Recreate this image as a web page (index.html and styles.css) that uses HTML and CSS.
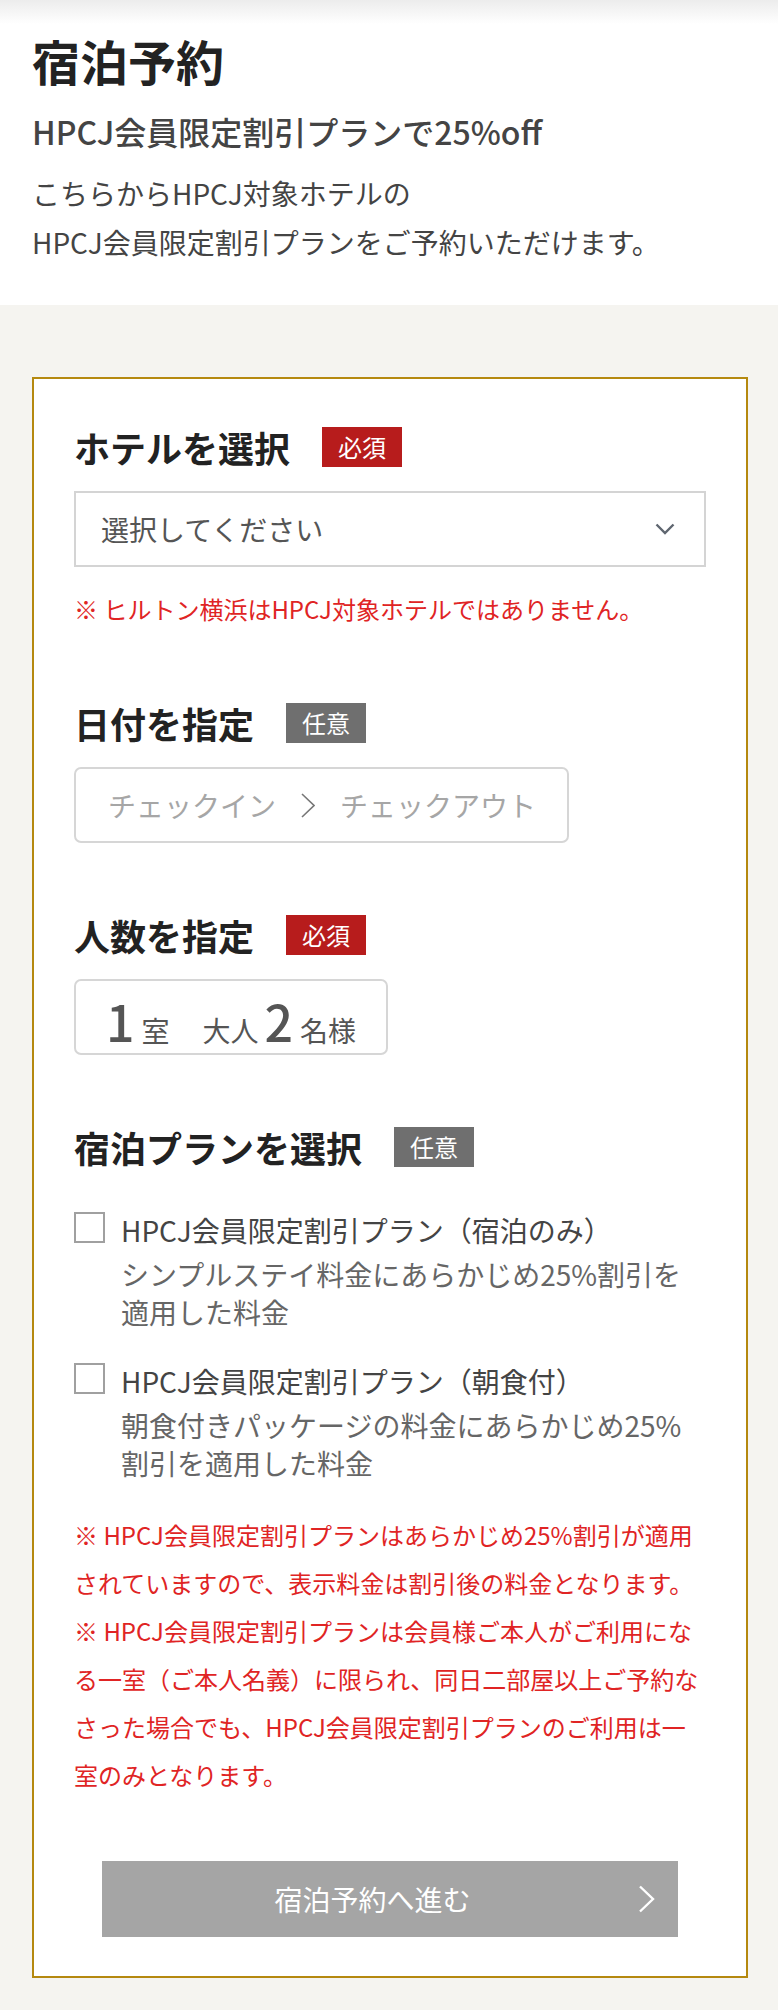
FILE: index.html
```html
<!DOCTYPE html>
<html lang="ja">
<head>
<meta charset="UTF-8">
<meta name="viewport" content="width=device-width, initial-scale=1.0">
<title>宿泊予約 | HPCJ</title>
<link rel="stylesheet" href="styles.css">
</head>
<body>
<div class="intro">
    <h1>宿泊予約</h1>
    <p class="lead">HPCJ会員限定割引プランで25%off</p>
    <p class="desc">こちらからHPCJ対象ホテルの<br>HPCJ会員限定割引プランをご予約いただけます。</p>
</div>

<div class="booking">
    <form class="card">
        <div class="field">
            <div class="field-head">
                <h2>ホテルを選択</h2>
                <span class="badge required">必須</span>
            </div>
            <div class="select">
                <span>選択してください</span>
                <svg class="select-arrow" width="20" height="12" viewBox="0 0 20 12"><path d="M1.5 1.5 L10 10 L18.5 1.5" fill="none" stroke="#5f6670" stroke-width="2.4"/></svg>
            </div>
            <p class="note">※ ヒルトン横浜はHPCJ対象ホテルではありません。</p>
        </div>

        <div class="field">
            <div class="field-head">
                <h2>日付を指定</h2>
                <span class="badge optional">任意</span>
            </div>
            <div class="box dates">
                <span>チェックイン</span>
                <svg width="14" height="25" viewBox="0 0 14 25"><path d="M1 1 L13 12.5 L1 24" fill="none" stroke="#777" stroke-width="1.6"/></svg>
                <span>チェックアウト</span>
            </div>
        </div>

        <div class="field">
            <div class="field-head">
                <h2>人数を指定</h2>
                <span class="badge required">必須</span>
            </div>
            <div class="box guests">
                <span class="num">1</span><span class="unit">室</span>
                <span class="unit adults">大人</span><span class="num">2</span><span class="unit">名様</span>
            </div>
        </div>

        <div class="field">
            <div class="field-head">
                <h2>宿泊プランを選択</h2>
                <span class="badge optional">任意</span>
            </div>
            <ul class="plans">
                <li>
                    <span class="check"></span>
                    <div>
                        <p class="plan-name">HPCJ会員限定割引プラン（宿泊のみ）</p>
                        <p class="plan-desc">シンプルステイ料金にあらかじめ25%割引を適用した料金</p>
                    </div>
                </li>
                <li>
                    <span class="check"></span>
                    <div>
                        <p class="plan-name">HPCJ会員限定割引プラン（朝食付）</p>
                        <p class="plan-desc">朝食付きパッケージの料金にあらかじめ25%割引を適用した料金</p>
                    </div>
                </li>
            </ul>
            <div class="notes">
                <p>※ HPCJ会員限定割引プランはあらかじめ25%割引が適用されていますので、表示料金は割引後の料金となります。</p>
                <p>※ HPCJ会員限定割引プランは会員様ご本人がご利用になる一室（ご本人名義）に限られ、同日二部屋以上ご予約なさった場合でも、HPCJ会員限定割引プランのご利用は一室のみとなります。</p>
            </div>
        </div>

        <button type="button" class="submit">
            宿泊予約へ進む
            <svg class="submit-arrow" width="17" height="28" viewBox="0 0 17 28"><path d="M2 1.5 L15 14 L2 26.5" fill="none" stroke="#fff" stroke-width="2.4"/></svg>
        </button>
    </form>
</div>
</body>
</html>
```

FILE: styles.css
```css
body {
    font-family: "Noto Sans CJK JP", "Noto Sans", sans-serif;
    background-color: #f5f4f0;
    color: #222;
    margin: 0;
    padding: 0;
}

p {
    margin: 0;
}

.intro {
    background: linear-gradient(#ececec, #fff 24px);
    padding: 24px 32px 38px;
}

h1 {
    font-size: 48px;
    line-height: 72px;
    font-weight: 700;
    margin: 0;
    color: #222;
}

.lead {
    font-size: 32px;
    line-height: 48px;
    font-weight: 500;
    color: #444;
    margin-top: 11px;
}

.desc {
    font-size: 28px;
    line-height: 49px;
    color: #444;
    margin-top: 14px;
}

.booking {
    padding: 72px 30px 32px 32px;
}

.card {
    background-color: #fff;
    border: 2px solid #b5890f;
    padding: 48px 40px 39px;
}

.field {
    margin-bottom: 72px;
}

.field-head {
    display: flex;
    align-items: center;
    gap: 32px;
    height: 40px;
    margin-bottom: 24px;
}

h2 {
    font-size: 36px;
    line-height: 40px;
    font-weight: 700;
    margin: 0;
    color: #222;
}

.badge {
    display: inline-block;
    height: 40px;
    line-height: 40px;
    padding: 0 16px;
    font-size: 24px;
    color: #fff;
}

.required {
    background-color: #b71c1c;
}

.optional {
    background-color: #6f6f6f;
}

.select {
    height: 76px;
    box-sizing: border-box;
    border: 2px solid #d4d4d4;
    padding: 0 29px 0 25px;
    display: flex;
    align-items: center;
    justify-content: space-between;
    font-size: 28px;
    color: #555;
}

.note {
    margin-top: 20px;
    font-size: 24px;
    line-height: 44px;
    color: #e02424;
}

.box {
    display: inline-flex;
    align-items: center;
    height: 76px;
    box-sizing: border-box;
    border: 2px solid #d6d6d6;
    border-radius: 7px;
    font-size: 28px;
}

.dates {
    padding: 0 31px 0 32px;
    gap: 25px;
    color: #a6a6a6;
}

.guests {
    align-items: baseline;
    padding: 9px 30px 0 30px;
    color: #555;
}

.num {
    font-size: 50px;
    line-height: 60px;
    font-weight: 500;
}

.unit {
    margin-left: 7px;
}

.adults {
    margin-left: 33px;
    margin-right: 6px;
}

.plans {
    list-style: none;
    margin: 42px 0 0;
    padding: 0;
}

.plans li {
    display: flex;
    gap: 16px;
    margin-bottom: 29px;
}

.check {
    flex: none;
    width: 31px;
    height: 31px;
    box-sizing: border-box;
    border: 2px solid #a0a0a0;
    margin-top: 3px;
}

.plan-name {
    font-size: 28px;
    line-height: 42px;
    color: #444;
}

.plan-desc {
    font-size: 28px;
    line-height: 38px;
    color: #666;
    margin-top: 4px;
}

.notes {
    font-size: 24px;
    line-height: 48px;
    color: #e02424;
}

.card .field:last-of-type {
    margin-bottom: 62px;
}

.submit {
    position: relative;
    display: block;
    width: 576px;
    height: 76px;
    margin: 0 auto;
    padding: 0 35px 0 0;
    border: none;
    background-color: #a5a5a5;
    color: #fff;
    font-family: inherit;
    font-size: 28px;
    cursor: pointer;
}

.submit-arrow {
    position: absolute;
    right: 23px;
    top: 24px;
}
```
